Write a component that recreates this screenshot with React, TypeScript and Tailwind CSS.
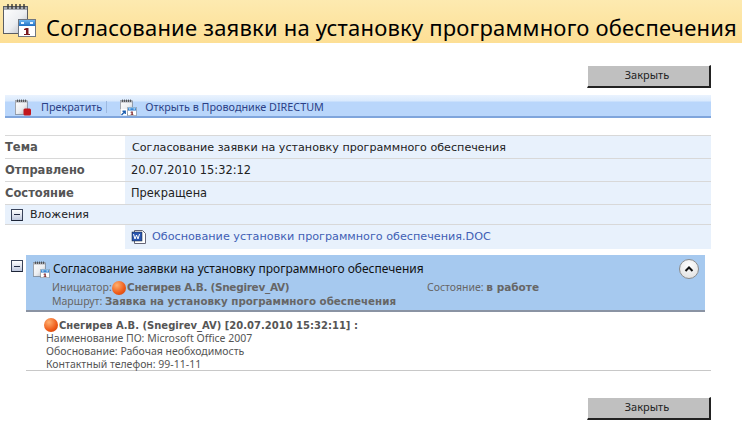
import type { ReactNode } from "react";

function BigCal({ size = 36, variant = "cal" }: { size?: number; variant?: "cal" | "stop" | "link" }) {
  return (
    <svg width={size} height={size} viewBox="0 0 36 36" className="shrink-0 block">
      <defs>
        <linearGradient id="pg" x1="0" y1="0" x2="1" y2="1">
          <stop offset="0" stopColor="#ffffff" />
          <stop offset="0.55" stopColor="#eceef1" />
          <stop offset="1" stopColor="#aeb2ba" />
        </linearGradient>
        <linearGradient id="hd" x1="0" y1="0" x2="0" y2="1">
          <stop offset="0" stopColor="#6db4ee" />
          <stop offset="1" stopColor="#1f6fc4" />
        </linearGradient>
      </defs>
      <rect x="2.5" y="5.5" width="24" height="27" fill="url(#pg)" stroke="#5a5d63" />
      <rect x="3" y="6" width="23" height="3" fill="#a9acb3" />
      <path d="M7 3v5M11 3v5M15 3v5M19 3v5M23 3v5" stroke="#333" strokeWidth="1.4" />
      {variant === "stop" ? (
        <rect x="19" y="21" width="15" height="14" rx="3" fill="#c2161c" />
      ) : (
        <g>
          <rect x="17.5" y="18.5" width="17" height="17" fill="#fff" stroke="#6f7680" />
          <rect x="18" y="19" width="16" height="6" fill="url(#hd)" />
          <rect x="20" y="21" width="3" height="2" fill="#e8f4ff" />
          <rect x="29" y="21" width="3" height="2" fill="#e8f4ff" />
          <path d="M25 27h2.5v6H29v1h-6v-1h2v-4h-2v-1z" fill="#7a1a20" />
          {variant === "link" && (
            <g>
              <rect x="3" y="22" width="13" height="13" fill="#fff" />
              <path d="M5 34l6-6M7 26.5h5.5V32" fill="none" stroke="#1d5fb0" strokeWidth="2.6" />
            </g>
          )}
        </g>
      )}
    </svg>
  );
}

function Ball() {
  return (
    <span className="inline-block w-[14px] h-[14px] rounded-full shrink-0 bg-[radial-gradient(circle_at_35%_30%,#ffb070,#ee5a18_60%,#c43d08)]" />
  );
}

function Minus() {
  return (
    <span className="flex items-center justify-center w-[12px] h-[12px] border border-[#39435a] border-b-[#1c2436] bg-[linear-gradient(#ffffff,#bfc8de)] shrink-0">
      <span className="w-[6px] h-px bg-[#222b44]" />
    </span>
  );
}

function CloseBtn() {
  return (
    <div className="flex justify-end pr-[31px]">
      <button className="w-[124px] h-[23px] bg-[#c0c0c0] border-r-2 border-b-2 border-t border-l border-t-white border-l-white border-r-[#222] border-b-[#222] text-[11px] text-[#222] font-['Noto_Sans',sans-serif] pb-px pr-[3px]">
        Закрыть
      </button>
    </div>
  );
}

function Row({ label, children }: { label: string; children: ReactNode }) {
  return (
    <div className="flex h-[23px] border-t border-[#d8d8d8]">
      <div className="w-[120px] pt-[3px] font-['DejaVu_Sans',sans-serif] font-bold text-[11.5px] text-[#555] whitespace-nowrap">{label}</div>
      <div className="flex-1 bg-[#e8f1fc] pl-[7px] pt-[2px] flex items-center text-[#222] whitespace-nowrap">{children}</div>
    </div>
  );
}

export default function App() {
  return (
    <div className="w-[742px] h-[441px] bg-white overflow-hidden font-['DejaVu_Sans',sans-serif] relative">
      <div className="h-[43px] bg-[linear-gradient(#fdeab0,#fddf95)] flex items-start pl-[1px] pt-[1px]">
        <BigCal size={36} />
        <h1 className="ml-[9px] mt-[15px] text-[22px] leading-none text-black font-['Noto_Sans',sans-serif] whitespace-nowrap tracking-[0.2px]">
          Согласование заявки на установку программного обеспечения
        </h1>
      </div>

      <div className="mt-[22px]"><CloseBtn /></div>

      <div className="mt-[7px] mx-[5px] w-[706px] h-[23px] pt-[2px] border-b-2 border-[#7fa5dc] bg-[linear-gradient(#eaf3fe_0%,#d9e9fd_30%,#b9d6fb_32%,#b9d6fb_100%)] flex items-center text-[10.8px] text-[#2b3f86] font-['Noto_Sans',sans-serif]">
        <span className="ml-[9px]"><BigCal size={18} variant="stop" /></span>
        <span className="ml-[9px] mt-[2px]">Прекратить</span>
        <span className="ml-[4px] w-px h-[12px] bg-[#9db9e0]" />
        <span className="ml-[12px]"><BigCal size={18} variant="link" /></span>
        <span className="ml-[8px] mt-[2px]">Открыть в Проводнике DIRECTUM</span>
      </div>

      <div className="mt-[17px] mx-[5px] w-[706px]">
        <Row label="Тема"><span className="text-[11.15px]">Согласование заявки на установку программного обеспечения</span></Row>
        <Row label="Отправлено"><span className="text-[11.4px] -ml-px">20.07.2010 15:32:12</span></Row>
        <Row label="Состояние"><span className="text-[11.4px] -ml-px">Прекращена</span></Row>
        <div className="h-[21px] border-t border-b border-[#d8d8d8] bg-[#e8f1fc] flex items-center pl-[6px] text-[11px] text-[#222]">
          <Minus />
          <span className="ml-[7px] mt-[2px]">Вложения</span>
        </div>
        <div className="flex h-[24px]">
          <div className="w-[120px]" />
          <div className="flex-1 bg-[#e8f1fc] flex items-center pl-[6px]">
            <svg width="16" height="16" viewBox="0 0 16 16" className="shrink-0">
              <path d="M3.5 1.5h8l3 3v10h-11z" fill="#fff" stroke="#667" />
              <rect x="1" y="3" width="10" height="9" fill="#2a56b0" stroke="#123" strokeWidth=".5" />
              <path d="M2.5 5l1.5 5 1.5-4 1.5 4 1.5-5" fill="none" stroke="#fff" strokeWidth="1" />
            </svg>
            <span className="ml-[5px] text-[11.2px] text-[#3f5fb5] whitespace-nowrap">Обоснование установки программного обеспечения.DOC</span>
          </div>
        </div>
      </div>

      <div className="mt-[6px] flex">
        <div className="w-[26px] pl-[11px] pt-[5px]"><Minus /></div>
        <div className="w-[685px]">
          <div className="relative w-[679px] h-[57px] bg-[#a6c9ef] border-b-[2px] border-[#8a93a3]">
            <div className="flex items-center pl-[6px] h-[26px] pt-[2px]">
              <BigCal size={18} />
              <span className="ml-[3px] text-[12px] text-[#111] font-['Noto_Sans',sans-serif] whitespace-nowrap">Согласование заявки на установку программного обеспечения</span>
            </div>
            <div className="flex items-center h-[15px] -mt-px pl-[26px] text-[10.5px] text-[#666] font-['Noto_Sans',sans-serif]">
              <span className="w-[60px] shrink-0 whitespace-nowrap">Инициатор:</span>
              <Ball />
              <span className="ml-px font-['DejaVu_Sans',sans-serif] font-bold text-[10.5px] tracking-[-0.3px] whitespace-nowrap">Снегирев А.В. (Snegirev_AV)</span>
              <span className="ml-auto mr-[166px] whitespace-nowrap">Состояние: <b className="font-['DejaVu_Sans',sans-serif]">в работе</b></span>
            </div>
            <div className="flex items-center h-[13px] pl-[26px] text-[10.5px] text-[#666] font-['Noto_Sans',sans-serif] whitespace-nowrap">
              Маршрут:&nbsp;<b className="font-['DejaVu_Sans',sans-serif] text-[10.3px]">Заявка на установку программного обеспечения</b>
            </div>
            <span className="absolute right-[6px] top-[4px] w-[20px] h-[20px] rounded-full border border-[#8c8c8c] bg-[radial-gradient(circle_at_50%_30%,#ffffff,#dcdcdc)] flex items-center justify-center">
              <svg width="10" height="8" viewBox="0 0 10 8"><path d="M1.5 6L5 2.5 8.5 6" fill="none" stroke="#111" strokeWidth="2" /></svg>
            </span>
          </div>
          <div className="w-[685px] pl-[18px] pt-[5px] h-[59px] border-b border-[#c8c8c8] text-[10.5px] leading-[13px] text-[#555] font-['Noto_Sans',sans-serif]">
            <div className="flex items-center h-[16px] -mb-px font-['DejaVu_Sans',sans-serif] font-bold text-[10px] whitespace-nowrap">
              <Ball />
              <span className="ml-px">Снегирев А.В. (Snegirev_AV) [20.07.2010 15:32:11] :</span>
            </div>
            <div className="pl-[2px]">Наименование ПО: Microsoft Office 2007</div>
            <div className="pl-[2px]">Обоснование: Рабочая необходимость</div>
            <div className="pl-[2px]">Контактный телефон: 99-11-11</div>
          </div>
        </div>
      </div>

      <div className="mt-[26px]"><CloseBtn /></div>
    </div>
  );
}
